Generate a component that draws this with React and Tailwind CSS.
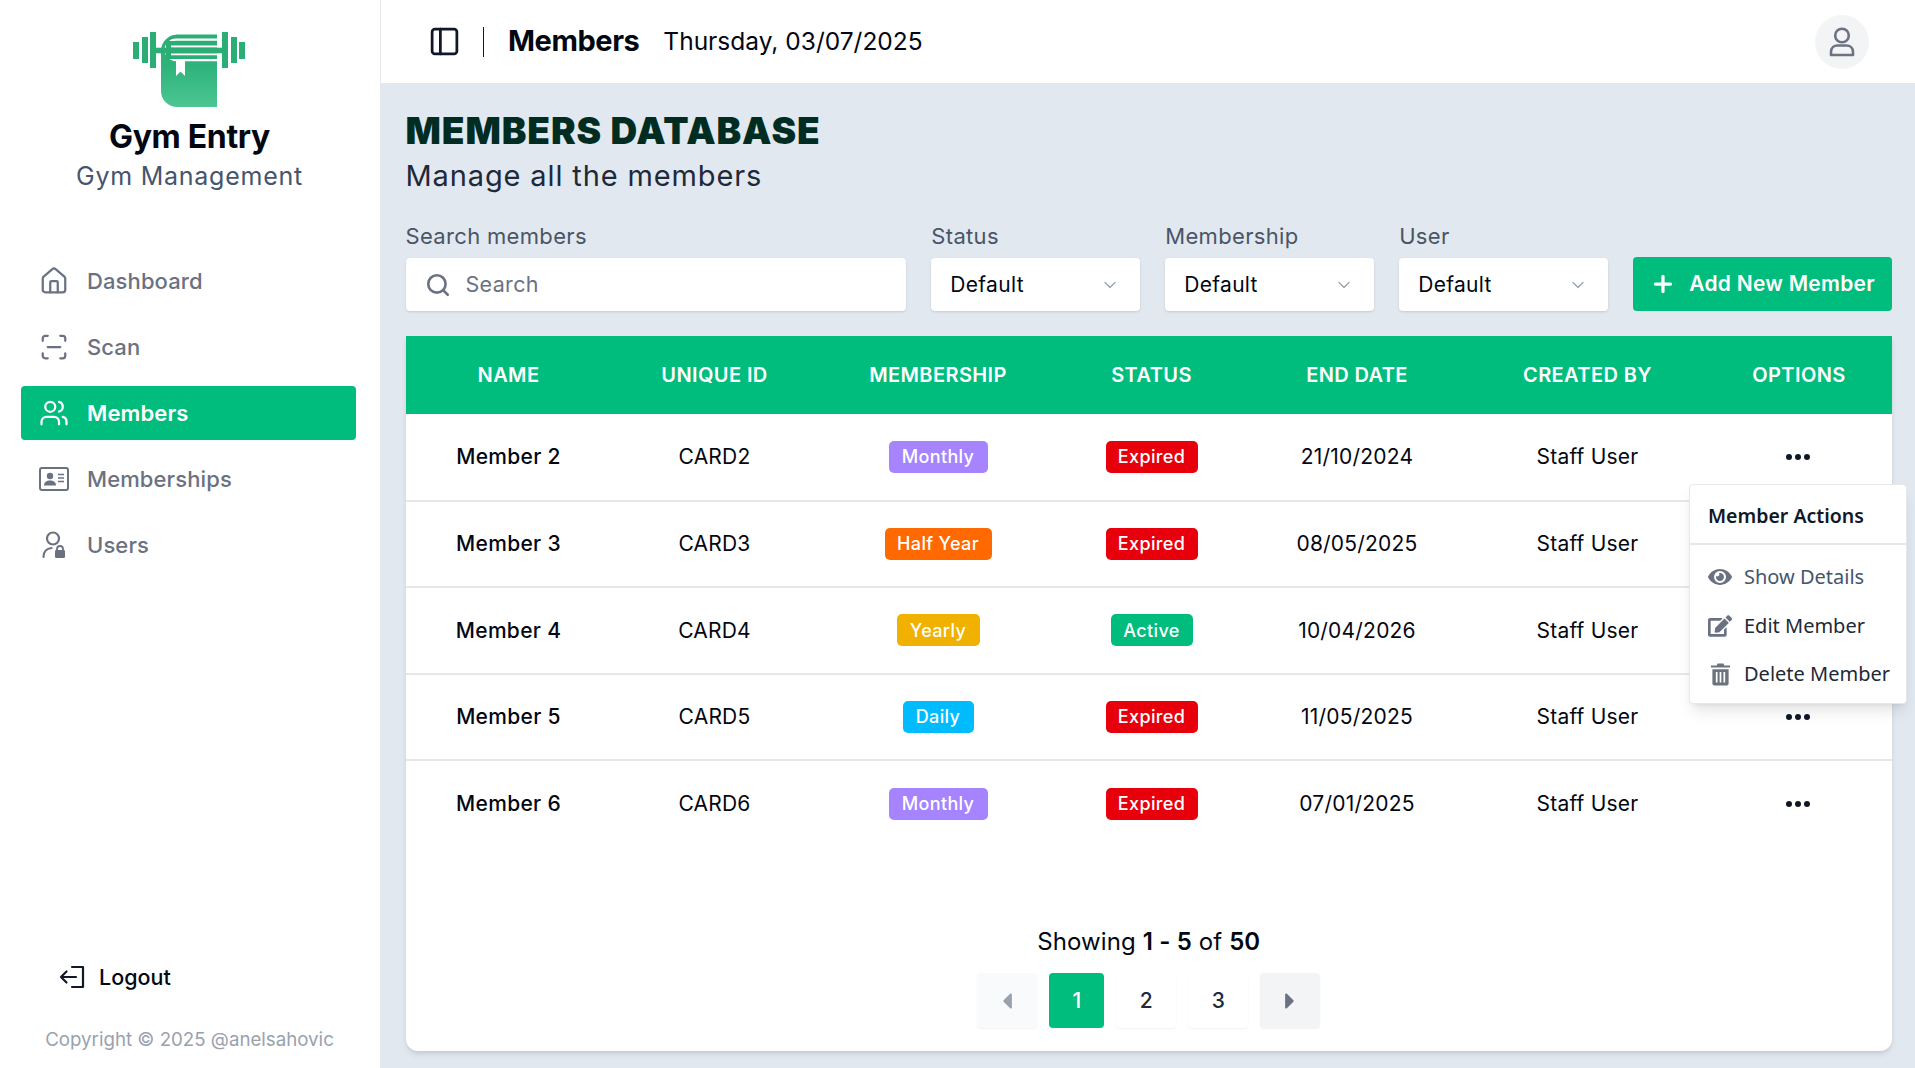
import React from 'react';
import { House, ScanLine, Users, PanelLeft, Search, ChevronDown, Plus } from 'lucide-react';
import { FaEye, FaEdit, FaCaretLeft, FaCaretRight } from 'react-icons/fa';

const Logo = () => (
  <svg width="112" height="75" viewBox="0 0 112 75">
    <defs>
      <linearGradient id="lg" x1="0" y1="0" x2="0" y2="1">
        <stop offset="0" stopColor="#2bae76" />
        <stop offset="0.45" stopColor="#2fb37b" />
        <stop offset="1" stopColor="#4cc694" />
      </linearGradient>
    </defs>
    <g fill="#2bae76">
      <rect x="0" y="10" width="6" height="17" />
      <rect x="9" y="5" width="6" height="26" />
      <rect x="17" y="0" width="6" height="36" />
      <rect x="89" y="0" width="6" height="36" />
      <rect x="98" y="5" width="6" height="26" />
      <rect x="106" y="10" width="6" height="17" />
    </g>
    <path d="M44 2.5H84V75H44A16 16 0 0 1 28 59V19A16.5 16.5 0 0 1 44 2.5Z" fill="url(#lg)" />
    <path d="M84 7.6H43A10.2 10.2 0 0 0 43 28H84" fill="none" stroke="#fff" strokeWidth="2.4" />
    <rect x="33" y="9" width="51" height="18" fill="#2bae76" />
    <path d="M84 14.6H38M84 22.2H38" stroke="#fff" strokeWidth="2" />
    <rect x="23" y="15.7" width="66" height="5.6" fill="#2bae76" />
    <path d="M43 28H52V44L47.5 39.5L43 44Z" fill="#fff" />
  </svg>
);

const IdCard = ({ className }) => (
  <svg viewBox="0 0 30 24" width="30" height="24" className={className}>
    <rect x="1" y="1" width="28" height="22" rx="2" fill="none" stroke="currentColor" strokeWidth="2" />
    <circle cx="11" cy="9" r="3.2" fill="currentColor" />
    <path d="M5 18.5c0-3.5 2.5-5 6-5s6 1.5 6 5z" fill="currentColor" />
    <path d="M19 7.5h6M19 11h6M19 14.5h6" stroke="currentColor" strokeWidth="1.6" />
  </svg>
);

const UserLock = ({ className }) => (
  <svg viewBox="0 0 24 28" width="24" height="28" className={className}>
    <circle cx="11" cy="7.5" r="6" fill="none" stroke="currentColor" strokeWidth="2.2" />
    <path d="M1.5 26c0-5 3-8.500 8-9" fill="none" stroke="currentColor" strokeWidth="2.2" strokeLinecap="round" />
    <rect x="13" y="19" width="10" height="8" rx="1.200" fill="currentColor" />
    <path d="M15 19.500v-1.500a3 3 0 0 1 6 0v1.500" fill="none" stroke="currentColor" strokeWidth="1.800" />
  </svg>
);

const LogoutIcon = () => (
  <svg viewBox="0 0 26 24" width="26" height="24" fill="none" stroke="#111827" strokeWidth="2.200" strokeLinecap="round" strokeLinejoin="round">
    <path d="M13 2H24V22H13" />
    <path d="M17 12H2M7.500 6.500L2 12L7.500 17.500" />
  </svg>
);

const AvatarIcon = () => (
  <svg viewBox="0 0 26 30" width="26" height="30" fill="none" stroke="#6b7280" strokeWidth="2.600">
    <circle cx="13" cy="8.500" r="6.800" />
    <path d="M2 28v-3c0-4 3-6.500 6.500-6.500h9c3.500 0 6.500 2.500 6.500 6.500v3z" strokeLinejoin="round" />
  </svg>
);

const TrashIcon = () => (
  <svg viewBox="0 0 22 24" width="21" height="24">
    <path d="M8 1h6l1 2h6v2.200H1V3h6z" fill="#6b7280" />
    <path d="M2.500 7h17v15a2 2 0 0 1-2 2h-13a2 2 0 0 1-2-2z" fill="#6b7280" />
    <path d="M7 10v11M11 10v11M15 10v11" stroke="#fff" strokeWidth="1.800" />
  </svg>
);

const navItems = [
  { label: 'Dashboard', icon: <House size={30} strokeWidth={1.8} /> },
  { label: 'Scan', icon: <ScanLine size={30} strokeWidth={1.8} /> },
  { label: 'Members', icon: <Users size={30} strokeWidth={1.8} />, active: true },
  { label: 'Memberships', icon: <IdCard /> },
  { label: 'Users', icon: <UserLock /> },
];

const rows = [
  ['Member 2', 'CARD2', 'Monthly', 'Expired', '21/10/2024'],
  ['Member 3', 'CARD3', 'Half Year', 'Expired', '08/05/2025'],
  ['Member 4', 'CARD4', 'Yearly', 'Active', '10/04/2026'],
  ['Member 5', 'CARD5', 'Daily', 'Expired', '11/05/2025'],
  ['Member 6', 'CARD6', 'Monthly', 'Expired', '07/01/2025'],
];

const badgeColors = {
  Monthly: 'bg-violet-400',
  'Half Year': 'bg-orange-500',
  Yearly: 'bg-yellow-500',
  Daily: 'bg-sky-400',
  Expired: 'bg-red-600',
  Active: 'bg-emerald-500',
};

const Badge = ({ text, wide }) => (
  <span className={`inline-flex h-8 items-center justify-center rounded-[5px] text-[18px] font-medium tracking-[0.02em] text-white ${badgeColors[text]} ${wide}`}>
    {text}
  </span>
);

const badgeWidth = {
  Monthly: 'w-[99px]',
  'Half Year': 'w-[107px]',
  Yearly: 'w-[83px]',
  Daily: 'w-[71px]',
  Expired: 'w-[92px]',
  Active: 'w-[82px]',
};

const Dots = () => (
  <span className="flex items-center justify-center gap-[3px] pr-[2px]">
    <span className="size-[6px] rounded-full bg-gray-900" />
    <span className="size-[6px] rounded-full bg-gray-900" />
    <span className="size-[6px] rounded-full bg-gray-900" />
  </span>
);

const Select = ({ label }) => (
  <div className="flex w-[209px] flex-col gap-[10px]">
    <span className="text-[22px] leading-[24px] tracking-[0.015em] text-gray-600">{label}</span>
    <div className="flex h-[53px] items-center justify-between rounded-[4px] bg-white pl-[19px] pr-[20px] shadow-sm">
      <span className="text-[21px] tracking-[0.015em] text-gray-950">Default</span>
      <ChevronDown size={20} strokeWidth={1.500} className="text-gray-400" />
    </div>
  </div>
);

export default function App() {
  return (
    <div className="flex h-[1068px] w-[1915px] overflow-hidden bg-slate-200 font-['Inter',sans-serif]">
      <aside className="flex h-full w-[381px] shrink-0 flex-col border-r border-gray-200 bg-white">
        <div className="flex flex-col items-center pt-[32px]">
          <span className="pr-[2px]"><Logo /></span>
          <div className="mt-[10px] pr-[1px] text-[32px] font-bold leading-[40px] tracking-[-0.01em] text-gray-950">Gym Entry</div>
          <div className="mt-[2px] pr-[1px] text-[25px] leading-[34px] tracking-[0.03em] text-slate-600">Gym Management</div>
        </div>
        <nav className="mt-[61px] flex flex-col gap-[12px] pl-[21px] pr-[24px]">
          {navItems.map((item) => (
            <div
              key={item.label}
              className={`flex h-[54px] items-center rounded-[4px] ${item.active ? 'bg-emerald-500 text-white' : 'text-gray-500'}`}
            >
              <span className="flex w-[66px] shrink-0 justify-center">{item.icon}</span>
              <span className={`text-[22px] ${item.active ? 'font-semibold tracking-[0.005em]' : 'font-medium tracking-[0.005em]'}`}>{item.label}</span>
            </div>
          ))}
        </nav>
        <div className="mt-auto flex flex-col items-center pb-[14px]">
          <div className="flex items-center gap-[14px] self-start pl-[59px]">
            <LogoutIcon />
            <span className="text-[21.500px] font-medium text-gray-950">Logout</span>
          </div>
          <div className="mt-[33px] pr-[1px] text-[18.700px] leading-[28px] text-gray-400">Copyright © 2025 @anelsahovic</div>
        </div>
      </aside>

      <div className="flex min-w-0 flex-1 flex-col">
        <header className="flex h-[83px] shrink-0 items-center bg-white pl-[47px] pr-[46px]">
          <PanelLeft size={33} strokeWidth={2} className="text-gray-900" />
          <span className="ml-[22px] h-[30px] w-px bg-gray-900" />
          <span className="mb-[2px] ml-[24px] text-[29px] font-bold tracking-[-0.015em] text-gray-950">Members</span>
          <span className="ml-[24px] text-[24.500px] text-gray-950">Thursday, 03/07/2025</span>
          <span className="ml-auto flex size-[54px] items-center justify-center rounded-full bg-gray-100">
            <AvatarIcon />
          </span>
        </header>

        <main className="relative flex min-h-0 flex-1 flex-col pb-[17px] pl-[24.500px] pr-[23px] pt-[25px]">
          <h1 className="text-[37px] font-black leading-[46px] tracking-[0.025em] text-emerald-950">MEMBERS DATABASE</h1>
          <p className="mt-[2px] text-[29px] leading-[40px] tracking-[0.03em] text-gray-800">Manage all the members</p>

          <div className="mt-[28px] flex items-end gap-[25px]">
            <div className="flex w-[501px] flex-col gap-[10px]">
              <span className="text-[22px] leading-[24px] tracking-[0.015em] text-gray-600">Search members</span>
              <div className="flex h-[53px] items-center rounded-[4px] bg-white pl-[19px] shadow-sm">
                <Search size={26} strokeWidth={2.400} className="text-gray-500" />
                <span className="ml-[15px] text-[21.500px] tracking-[0.015em] text-gray-500">Search</span>
              </div>
            </div>
            <Select label="Status" />
            <Select label="Membership" />
            <Select label="User" />
            <button className="flex h-[54px] w-[259px] items-center justify-center gap-[13px] rounded-[4px] bg-emerald-500 text-[21px] font-semibold tracking-[0.012em] text-white">
              <Plus size={26} strokeWidth={3} />
              Add New Member
            </button>
          </div>

          <section className="mt-[25px] flex flex-1 flex-col overflow-hidden rounded-b-xl bg-white shadow-md">
            <table className="w-full table-fixed border-collapse">
              <colgroup>
                <col className="w-[206px]" />
                <col className="w-[206px]" />
                <col className="w-[241px]" />
                <col className="w-[186px]" />
                <col className="w-[225px]" />
                <col className="w-[236px]" />
                <col className="w-[187px]" />
              </colgroup>
              <thead>
                <tr className="h-[78px] bg-emerald-500">
                  {['NAME', 'UNIQUE ID', 'MEMBERSHIP', 'STATUS', 'END DATE', 'CREATED BY', 'OPTIONS'].map((h) => (
                    <th key={h} className="text-center text-[20px] font-semibold tracking-[0.02em] text-white">{h}</th>
                  ))}
                </tr>
              </thead>
              <tbody>
                {rows.map((r, i) => (
                  <tr key={r[0]} className={`h-[86.500px] ${i < rows.length - 1 ? 'border-b-2 border-gray-200' : ''}`}>
                    <td className="text-center text-[21px] font-medium tracking-[0.015em] text-gray-950">{r[0]}</td>
                    <td className="text-center text-[21px] tracking-[0.01em] text-gray-950">{r[1]}</td>
                    <td className="text-center"><Badge text={r[2]} wide={badgeWidth[r[2]]} /></td>
                    <td className="text-center"><Badge text={r[3]} wide={badgeWidth[r[3]]} /></td>
                    <td className="text-center text-[21px] tracking-[0.01em] text-gray-950">{r[4]}</td>
                    <td className="text-center text-[21px] tracking-[0.01em] text-gray-950">Staff User</td>
                    <td className="text-center"><Dots /></td>
                  </tr>
                ))}
              </tbody>
            </table>

            <div className="mt-auto flex flex-col items-center pb-[23px]">
              <div className="text-[24px] leading-[36px] tracking-[0.005em] text-gray-950">
                Showing <span className="font-semibold">1 - 5</span> of <span className="font-semibold">50</span>
              </div>
              <div className="mt-[13px] flex items-center gap-[12px]">
                <span className="flex h-[55px] w-[60px] items-center justify-center rounded-[4px] bg-gray-50 text-gray-400 shadow-xs"><FaCaretLeft size={26} /></span>
                <span className="flex size-[55px] items-center justify-center rounded-[4px] bg-emerald-500 text-[21px] font-medium text-white">1</span>
                <span className="flex h-[55px] w-[60px] items-center justify-center rounded-[4px] bg-white text-[21px] font-medium text-slate-800 shadow-xs">2</span>
                <span className="flex h-[55px] w-[60px] items-center justify-center rounded-[4px] bg-white text-[21px] font-medium text-slate-800 shadow-xs">3</span>
                <span className="flex h-[55px] w-[60px] items-center justify-center rounded-[4px] bg-gray-100 text-gray-500 shadow-xs"><FaCaretRight size={26} /></span>
              </div>
            </div>
          </section>

          <div className="absolute left-[1308px] top-[401px] w-[218px] rounded-[4px] border border-gray-200 bg-white pb-[4px] pt-[8px] font-['Noto_Sans',sans-serif] shadow-lg">
            <div className="px-[18px] pb-[11px] pt-[7px] text-[19.500px] font-semibold leading-[32px] text-gray-900">Member Actions</div>
            <div className="h-[2px] bg-gray-200" />
            <div className="mt-[8px] flex h-[48.500px] items-center gap-[12px] pl-[18px] text-[20px] text-slate-600">
              <span className="flex w-[24px] justify-center text-gray-500"><FaEye size={24} /></span>Show Details
            </div>
            <div className="flex h-[48.500px] items-center gap-[12px] pl-[18px] text-[20px] text-gray-800">
              <span className="flex w-[24px] justify-center text-gray-500"><FaEdit size={24} /></span>Edit Member
            </div>
            <div className="flex h-[48.500px] items-center gap-[12px] whitespace-nowrap pl-[18px] text-[20px] text-gray-800">
              <span className="flex w-[24px] justify-center"><TrashIcon /></span>Delete Member
            </div>
          </div>
        </main>
      </div>
    </div>
  );
}
